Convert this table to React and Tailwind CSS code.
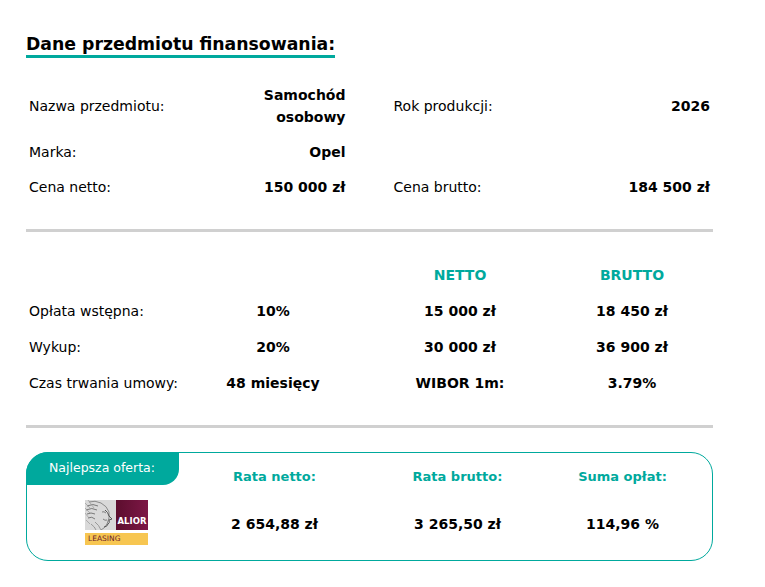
import React from "react";

const TEAL = "text-[#00a99d]";

function Logo() {
  return (
    <div className="w-[63px] flex flex-col gap-[3px]">
      <div className="flex h-[30px]">
        <svg width="31" height="30" viewBox="0 0 31 30" className="block">
          <rect width="31" height="30" fill="#d9d9d9" />
          <path d="M4 2 Q10 0 16 3 Q22 6 24 12 Q25 18 22 24 Q20 28 16 30" stroke="#8a8a8a" strokeWidth="1" fill="none" />
          <path d="M2 6 Q8 3 13 6 M1 10 Q7 7 12 10 M2 14 Q6 12 10 14 M3 18 Q7 16 10 19" stroke="#6e6e6e" strokeWidth="0.9" fill="none" />
          <path d="M0 3 L6 9 M3 0 L9 8 M0 8 L5 13 M0 13 L4 18 M1 20 L5 24" stroke="#9a9a9a" strokeWidth="0.7" fill="none" />
          <path d="M20 10 Q23 12 24 16 L27 19 L24 20 Q25 23 23 24 Q22 27 19 27" stroke="#555" strokeWidth="1" fill="none" />
          <path d="M17 12 Q19 11 21 13 M18 19 Q20 21 22 20" stroke="#666" strokeWidth="0.8" fill="none" />
          <path d="M10 22 Q14 25 16 30 M6 24 Q10 27 11 30" stroke="#888" strokeWidth="0.8" fill="none" />
        </svg>
        <div className="flex-1 bg-gradient-to-r from-[#5c0e2e] to-[#7d1746] flex items-end justify-center pb-[4px]">
          <span className="text-white text-[8.5px] leading-none font-bold">ALIOR</span>
        </div>
      </div>
      <div className="h-[12px] bg-[#f7c651] flex items-center pl-[3px]">
        <span className="text-[#6b1d2c] text-[7.5px] leading-none">LEASING</span>
      </div>
    </div>
  );
}

export default function App() {
  return (
    <div className="min-h-screen bg-white font-['DejaVu_Sans',sans-serif] text-black">
      <div className="w-[687px] ml-[26px] pt-[33px] pb-[28px]">
        <h2 className="inline-block text-[17.3px] leading-[22px] font-bold border-b-[3px] border-[#00a99d]">
          Dane przedmiotu finansowania:
        </h2>

        <div className="mt-[26px] px-[3px] grid grid-cols-2 gap-x-[48px] gap-y-[13px] leading-[22px]">
          <div className="flex items-center justify-between">
            <span className="text-[14px]">Nazwa przedmiotu:</span>
            <span className="text-[14px] font-bold text-right">
              Samochód
              <br />
              osobowy
            </span>
          </div>
          <div className="flex items-center justify-between">
            <span className="text-[14px]">Rok produkcji:</span>
            <span className="text-[14px] font-bold">2026</span>
          </div>
          <div className="flex items-center justify-between">
            <span className="text-[14px]">Marka:</span>
            <span className="text-[14px] font-bold">Opel</span>
          </div>
          <div />
          <div className="flex items-center justify-between">
            <span className="text-[14px]">Cena netto:</span>
            <span className="text-[14px] font-bold">150 000 zł</span>
          </div>
          <div className="flex items-center justify-between">
            <span className="text-[14px]">Cena brutto:</span>
            <span className="text-[14px] font-bold">184 500 zł</span>
          </div>
        </div>

        <div className="mt-[31px] h-[3px] bg-[#d0d0d0]" />

        <div className="mt-[32px] grid grid-cols-[174px_146px_228px_116px] gap-y-[14px] leading-[22px] text-[14px]">
          <div />
          <div />
          <div className={`text-center font-bold ${TEAL}`}>NETTO</div>
          <div className={`text-center font-bold ${TEAL}`}>BRUTTO</div>

          <div className="pl-[3px]">Opłata wstępna:</div>
          <div className="text-center font-bold">10%</div>
          <div className="text-center font-bold">15 000 zł</div>
          <div className="text-center font-bold">18 450 zł</div>

          <div className="pl-[3px]">Wykup:</div>
          <div className="text-center font-bold">20%</div>
          <div className="text-center font-bold">30 000 zł</div>
          <div className="text-center font-bold">36 900 zł</div>

          <div className="pl-[3px]">Czas trwania umowy:</div>
          <div className="text-center font-bold">48 miesięcy</div>
          <div className="text-center font-bold">WIBOR 1m:</div>
          <div className="text-center font-bold">3.79%</div>
        </div>

        <div className="mt-[31px] h-[3px] bg-[#d0d0d0]" />

        <div className="mt-[24px] border-[1.5px] border-[#00a99d] rounded-[22px] pb-[15px] grid grid-cols-[152px_191px_175px_155px] text-[14px] leading-[22px]">
          <div className="-ml-[1.5px] -mt-[1.5px] w-[153px] h-[33px] bg-[#00a99d] rounded-tl-[22px] rounded-br-[16px] flex items-center justify-center">
            <span className="text-white text-[12.5px]">Najlepsza oferta:</span>
          </div>
          <div className={`pt-[13px] text-center text-[13px] font-bold ${TEAL}`}>Rata netto:</div>
          <div className={`pt-[13px] text-center text-[13px] font-bold ${TEAL}`}>Rata brutto:</div>
          <div className={`pt-[13px] text-center text-[13px] font-bold ${TEAL}`}>Suma opłat:</div>

          <div className="mt-[11px] h-[46px] flex items-center pl-[58px]">
            <Logo />
          </div>
          <div className="mt-[11px] h-[46px] pt-[4px] flex items-center justify-center font-bold">2 654,88 zł</div>
          <div className="mt-[11px] h-[46px] pt-[4px] flex items-center justify-center font-bold">3 265,50 zł</div>
          <div className="mt-[11px] h-[46px] pt-[4px] flex items-center justify-center font-bold">114,96 %</div>
        </div>
      </div>
    </div>
  );
}
